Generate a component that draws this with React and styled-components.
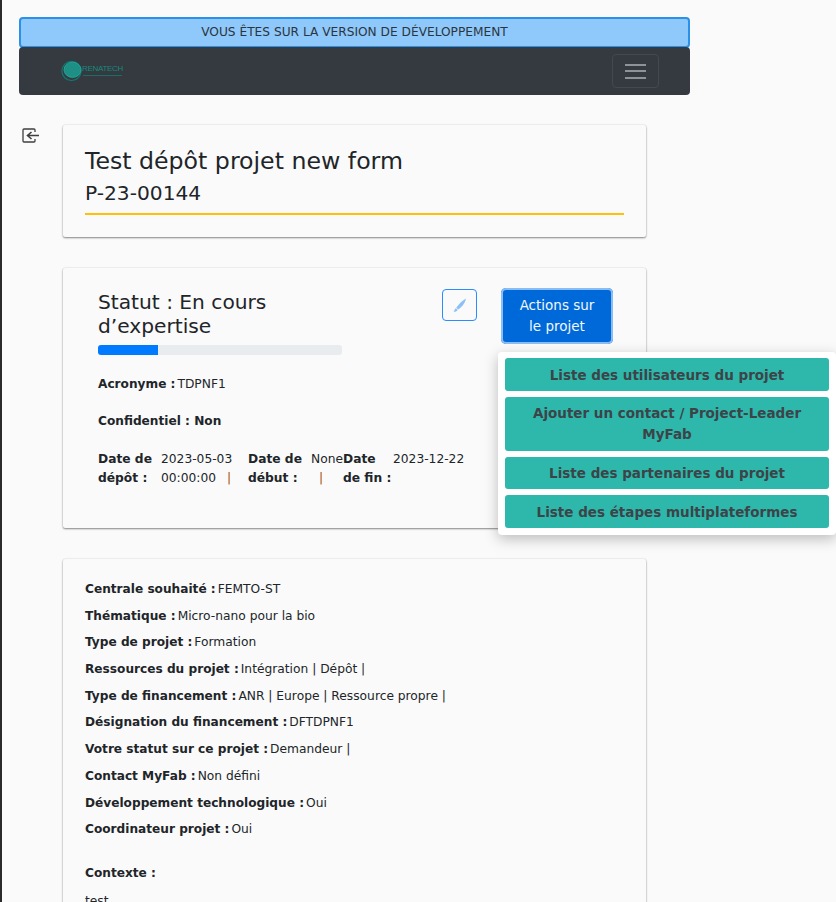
import React from 'react';
import styled, {createGlobalStyle} from 'styled-components';

const GlobalStyle=createGlobalStyle`
  html,body{
    margin:0;
    height:100%;
    overflow:hidden;
    background:#fafafa;
  }
  *{box-sizing:border-box;}
`;

const Page=styled.div`
  height:100vh;
  overflow:hidden;
  border-left:2px solid #2b2b2b;
  padding:17px 0 0 17px;
  font-family:"DejaVu Sans",sans-serif;
  font-size:12.25px;
  line-height:19.5px;
  color:#212529;
`;
const Alert=styled.div`
  width:671px;
  height:31px;
  margin-bottom:-1px;
  background:#8fc8fa;
  border:2px solid #2b90e8;
  border-radius:4px;
  text-align:center;
  font-size:12.2px;
  line-height:27px;
  color:#2b3540;
`;
const Navbar=styled.nav`
  width:671px;
  height:48px;
  background:#343a40;
  border-radius:4px;
  display:flex;
  align-items:center;
  justify-content:space-between;
  padding:0 31px 0 42px;
`;
const Logo=styled.div`
  display:flex;
  align-items:center;
  width:64px;
  height:24px;
  position:relative;
  svg{flex:none;}
`;
const LogoName=styled.span`
  margin-left:-1px;
  margin-top:-4px;
  font-family:"Liberation Sans",sans-serif;
  font-size:8px;
  line-height:10px;
  letter-spacing:-.3px;
  color:#17897d;
`;
const LogoTag=styled.span`
  position:absolute;
  left:22px;
  top:16px;
  width:39px;
  height:1px;
  background:#1a6d66;
`;
const Toggler=styled.button`
  width:47px;
  height:34px;
  background:none;
  border:1px solid #45494f;
  border-radius:4px;
  display:flex;
  flex-direction:column;
  align-items:center;
  justify-content:center;
  gap:4.5px;
  padding:0;
`;
const TogglerBar=styled.span`
  width:21px;
  height:2px;
  background:#8f9296;
`;
const Main=styled.div`
  display:flex;
  margin-top:30px;
`;
const Side=styled.div`
  width:44px;
  padding:3px 0 0 3px;
  svg{display:block;}
`;
const Cards=styled.div`
  width:583px;
  display:flex;
  flex-direction:column;
  gap:31px;
`;
const Card=styled.section`
  background:#fafafa;
  border-radius:2px;
  box-shadow:0 1px 2px rgba(0,0,0,.45),0 0 2px rgba(0,0,0,.12);
  padding:${p=>p.$pad};
  height:${p=>p.$h||'auto'};
`;
const Title=styled.h1`
  margin:0;
  font-size:23.65px;
  font-weight:400;
  line-height:29px;
`;
const Reference=styled.h2`
  margin:0;
  font-size:20.2px;
  font-weight:400;
  line-height:35px;
  border-bottom:2px solid #ffc107;
  height:39px;
`;
const StatusHead=styled.div`
  display:flex;
  align-items:flex-start;
`;
const StatusLeft=styled.div`
  width:244px;
  flex:none;
`;
const StatusTitle=styled.h3`
  margin:0;
  font-size:20.2px;
  font-weight:400;
  line-height:24px;
`;
const Progress=styled.div`
  height:10px;
  margin-top:7px;
  background:#e9ecef;
  border-radius:3px;
  overflow:hidden;
`;
const ProgressBar=styled.div`
  height:100%;
  background:#007bff;
`;
const EditButton=styled.button`
  flex:none;
  width:35px;
  height:32px;
  margin:-1px 0 0 100px;
  background:none;
  border:1px solid #2a8cff;
  border-radius:4px;
  padding:0;
  display:flex;
  align-items:center;
  justify-content:center;
`;
const ActionsWrap=styled.div`
  position:relative;
  flex:none;
  width:112px;
  margin:-2px 0 0 24px;
`;
const ActionsButton=styled.button`
  width:112px;
  height:56px;
  background:#0069d9;
  border:0;
  box-shadow:0 0 0 2px #8abdf5 inset;
  border-radius:5px;
  color:#f2f7fd;
  font:13.5px/21px "DejaVu Sans",sans-serif;
  padding:0 16px;
`;
const Menu=styled.div`
  position:absolute;
  top:64px;
  left:-3px;
  width:338px;
  height:183px;
  background:#fff;
  border-radius:4px;
  box-shadow:0 4px 14px rgba(0,0,0,.25);
  padding:6px 7px;
  display:flex;
  flex-direction:column;
  gap:6px;
`;
const MenuItem=styled.div`
  background:#2eb8ac;
  border-radius:3px;
  height:${p=>p.$h||'33px'};
  padding:${p=>p.$top||'7px'} 18px 0;
  text-align:center;
  font-size:13.5px;
  font-weight:700;
  line-height:21px;
  color:#3c4448;
`;
const Line=styled.p`
  margin:${p=>p.$mt||0} 0 0;
`;
const Label=styled.b`
  font-weight:700;
  font-size:12.15px;
  margin-right:2px;
`;
const DateRow=styled.div`
  display:flex;
  margin-top:19px;
`;
const DateCol=styled.div`
  display:flex;
  flex:none;
  width:${p=>p.$w};
  line-height:19px;
`;
const DateLabel=styled.b`
  width:${p=>p.$w};
  flex:none;
`;
const DateValue=styled.span`
  display:block;
`;
const Pipe=styled.span`
  color:#a84f00;
  margin-left:${p=>p.$ml};
`;
const InfoLine=styled.p`
  margin:0;
  height:26.7px;
`;

const infos=[
  ['Centrale souhaité :','FEMTO-ST'],
  ['Thématique :','Micro-nano pour la bio'],
  ['Type de projet :','Formation'],
  ['Ressources du projet :','Intégration | Dépôt |'],
  ['Type de financement :','ANR | Europe | Ressource propre |'],
  ['Désignation du financement :','DFTDPNF1'],
  ['Votre statut sur ce projet :','Demandeur |'],
  ['Contact MyFab :','Non défini'],
  ['Développement technologique :','Oui'],
  ['Coordinateur projet :','Oui'],
];

function App() {
  return (
    <>
      <GlobalStyle />
      <Page>
        <Alert>VOUS ÊTES SUR LA VERSION DE DÉVELOPPEMENT</Alert>
        <Navbar>
          <Logo>
            <svg width="22" height="22" viewBox="0 0 22 22" fill="none">
              <circle cx="10.5" cy="11" r="9.6" stroke="#11776e" strokeWidth="1.2" />
              <ellipse cx="11.5" cy="9.8" rx="8.5" ry="7.6" fill="#1d8f85" stroke="#25ad9f" strokeWidth=".8" />
            </svg>
            <LogoName>RENATECH</LogoName>
            <LogoTag />
          </Logo>
          <Toggler>
            <TogglerBar />
            <TogglerBar />
            <TogglerBar />
          </Toggler>
        </Navbar>
        <Main>
          <Side>
            <svg width="18" height="15" viewBox="0 0 18 15" fill="none" stroke="#3f3f3f">
              <path d="M13 4V2a1 1 0 0 0-1-1H2a1 1 0 0 0-1 1v11a1 1 0 0 0 1 1h10a1 1 0 0 0 1-1v-2" strokeWidth="1.3" />
              <path d="M17 7.5H6M9.5 4L5.5 7.5l4 3.5" strokeWidth="1.6" />
            </svg>
          </Side>
          <Cards>
            <Card $pad="22px 22px 0" $h="112px">
              <Title>Test dépôt projet new form</Title>
              <Reference>P-23-00144</Reference>
            </Card>
            <Card $pad="22px 33px 0 35px" $h="260px">
              <StatusHead>
                <StatusLeft>
                  <StatusTitle>Statut : En cours d’expertise</StatusTitle>
                  <Progress><ProgressBar style={{width:'24.6%'}} /></Progress>
                </StatusLeft>
                <EditButton aria-label="Modifier">
                  <svg width="16" height="16" viewBox="0 0 16 16">
                    <path d="M14 1.5C13.5 5 10.5 9.5 6.3 12.6L4.2 10.8C7 7 10.5 3.2 14 1.5Z" fill="#8cc0f8" />
                    <path d="M3.8 11.3L5.8 13C4.8 14.6 3 15 1.5 14.6C2.4 13.8 2.6 12.3 3.8 11.3Z" fill="#8cc0f8" />
                  </svg>
                </EditButton>
                <ActionsWrap>
                  <ActionsButton>Actions sur le projet</ActionsButton>
                  <Menu>
                    <MenuItem>Liste des utilisateurs du projet</MenuItem>
                    <MenuItem $h="54px" $top="6px">Ajouter un contact / Project-Leader MyFab</MenuItem>
                    <MenuItem $h="32px" $top="6px">Liste des partenaires du projet</MenuItem>
                    <MenuItem>Liste des étapes multiplateformes</MenuItem>
                  </Menu>
                </ActionsWrap>
              </StatusHead>
              <Line $mt="20px"><Label>Acronyme :</Label>TDPNF1</Line>
              <Line $mt="17px"><Label>Confidentiel : Non</Label></Line>
              <DateRow>
                <DateCol $w="150px">
                  <DateLabel $w="63px">Date de dépôt :</DateLabel>
                  <div>
                    <DateValue>2023-05-03</DateValue>
                    <DateValue>00:00:00<Pipe $ml="11px">|</Pipe></DateValue>
                  </div>
                </DateCol>
                <DateCol $w="95px">
                  <DateLabel $w="63px">Date de début :</DateLabel>
                  <div>
                    <DateValue>None</DateValue>
                    <DateValue><Pipe $ml="8px">|</Pipe></DateValue>
                  </div>
                </DateCol>
                <DateCol $w="140px">
                  <DateLabel $w="50px">Date de fin :</DateLabel>
                  <span>2023-12-22</span>
                </DateCol>
              </DateRow>
            </Card>
            <Card $pad="21px 22px 0" $h="400px">
              {infos.map(([label,value])=>(
                <InfoLine key={label}><Label>{label}</Label>{value}</InfoLine>
              ))}
              <Line $mt="17px"><Label>Contexte :</Label></Line>
              <Line $mt="9px">test</Line>
            </Card>
          </Cards>
        </Main>
      </Page>
    </>
  );
}

export default App;
